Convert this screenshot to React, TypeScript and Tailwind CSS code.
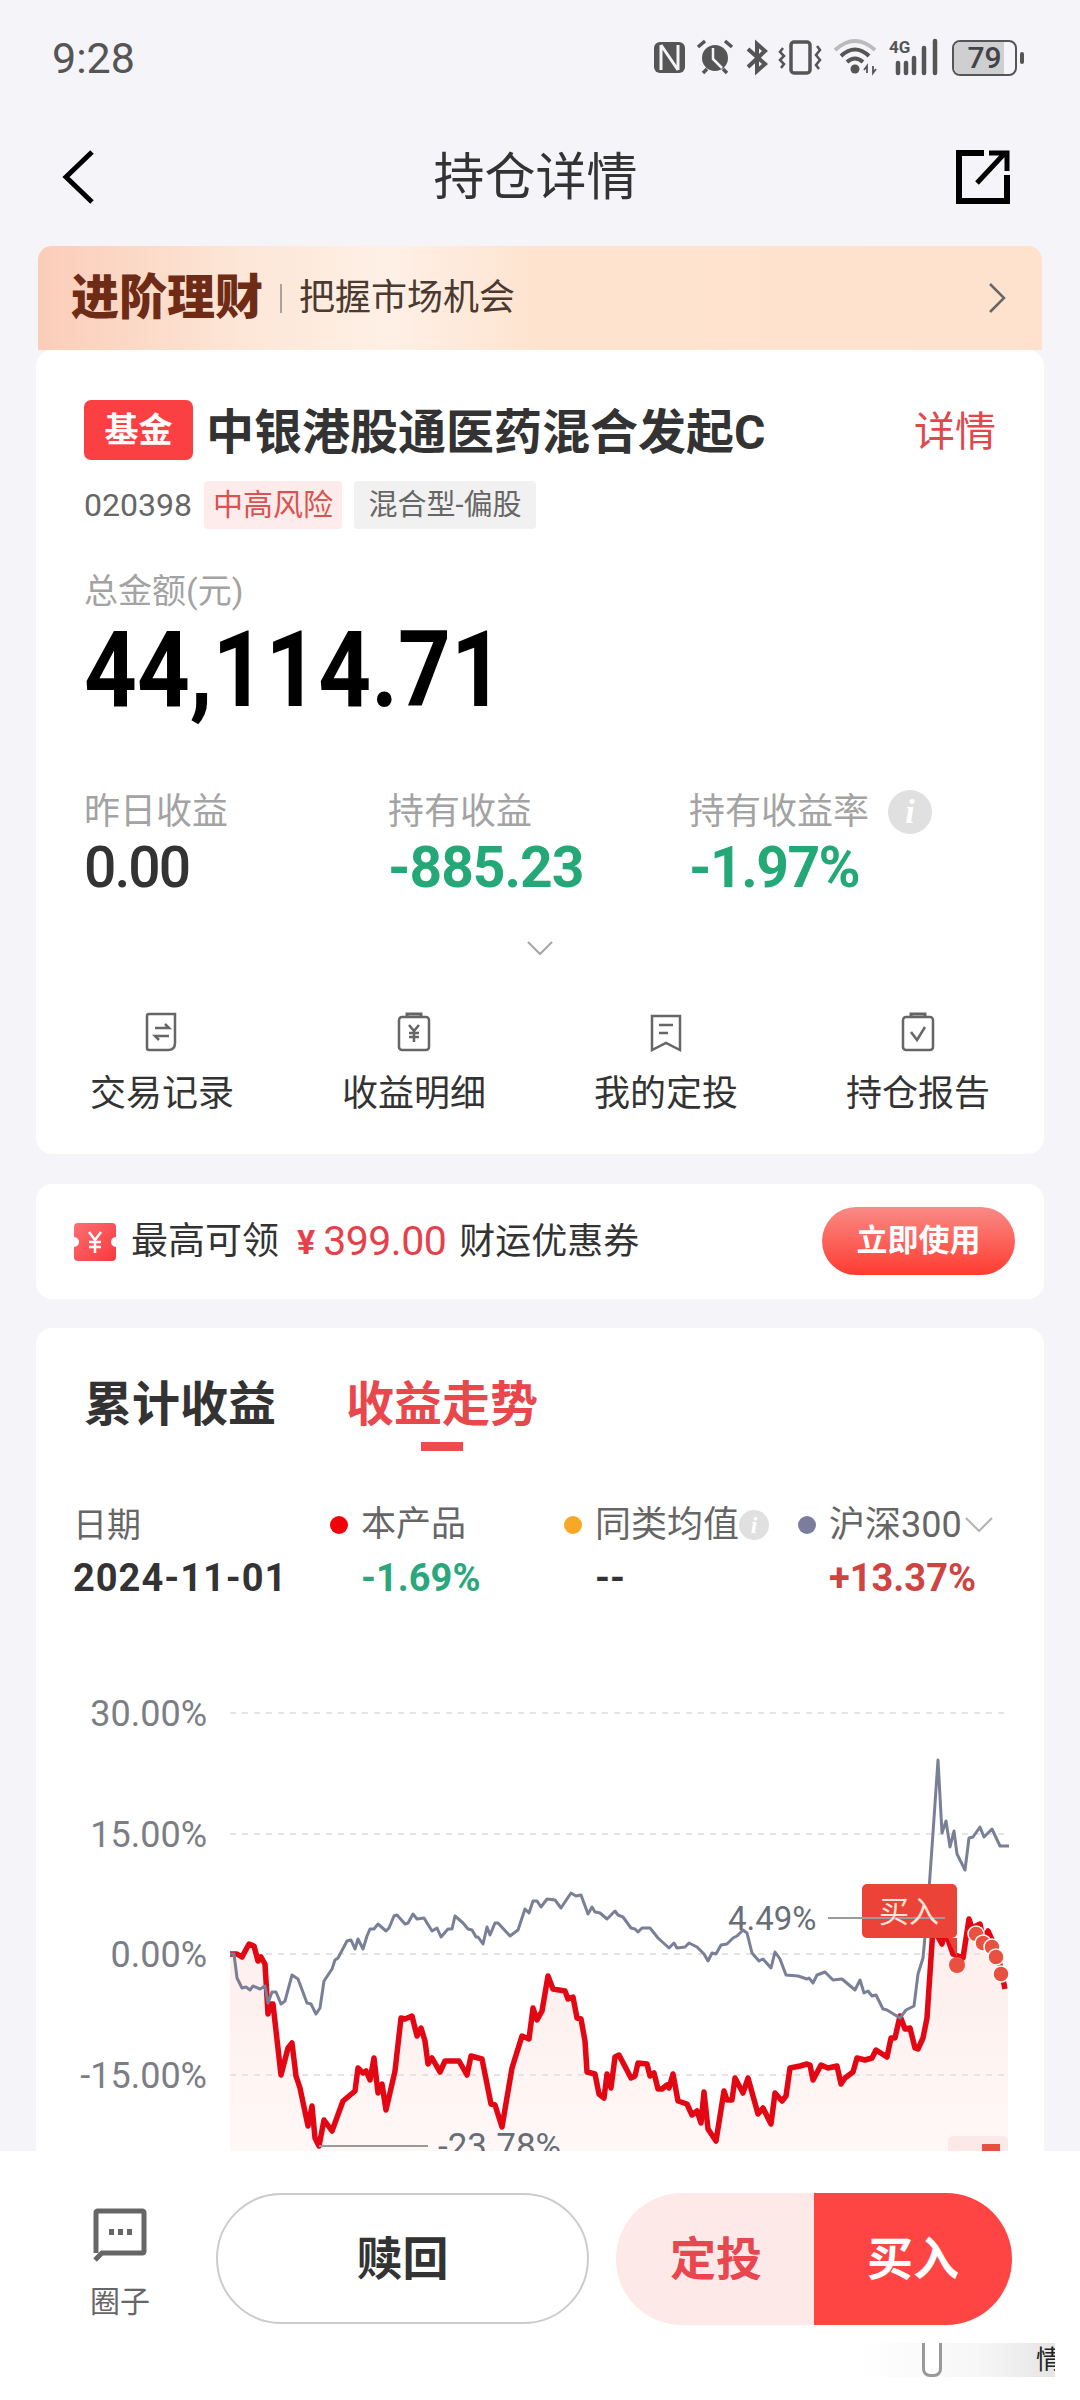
import React from "react";

// chart lines are traced from the screenshot, in page coordinates
const redLine =
  "230,1953 237,1953 242,1956 249,1943 254,1945 258,1960 261,1956 265,1963 268,2013 270,2003 273,2003 281,2074 288,2047 292,2042 296,2075 300,2087 308,2125 312,2105 315,2137 319,2145 324,2119 332,2130 343,2100 355,2090 358,2067 363,2072 366,2070 370,2079 374,2057 378,2092 382,2083 386,2109 395,2070 401,2017 405,2018 412,2015 417,2035 421,2027 425,2040 428,2063 432,2057 440,2071 445,2060 459,2060 467,2074 471,2055 482,2058 491,2103 495,2104 502,2126 512,2067 522,2035 529,2038 533,2007 537,2019 542,2010 548,1975 553,1988 565,1990 568,1998 573,1996 577,2017 581,2018 585,2040 587,2071 595,2073 599,2093 604,2097 607,2073 611,2087 615,2056 619,2054 631,2077 635,2075 638,2062 647,2063 650,2075 654,2072 658,2088 662,2088 667,2084 669,2087 673,2073 678,2100 687,2103 692,2114 697,2110 701,2122 704,2091 708,2128 716,2140 724,2090 727,2099 732,2099 735,2077 743,2092 748,2077 758,2113 763,2107 771,2123 775,2092 782,2100 786,2095 790,2067 800,2065 807,2063 810,2064 813,2079 821,2064 828,2067 837,2065 841,2083 845,2077 853,2071 857,2057 865,2059 872,2057 876,2049 887,2056 891,2037 895,2037 900,2015 905,2028 910,2027 915,2047 918,2048 923,2037 927,2017 933,1927 942,1943 945,1930 953,1953 963,1957 969,1918 972,1927 980,1923 983,1937 988,1930 997,1950 1005,1988";

const grayLine =
  "230,1953 234,1953 237,1977 242,1987 246,1986 250,1989 253,1985 260,1988 265,1985 268,2002 272,1991 276,1991 281,2003 285,2000 292,1974 298,1978 307,2002 311,2003 316,2013 320,2007 324,1980 332,1968 335,1959 338,1957 347,1940 351,1939 355,1948 358,1938 363,1948 367,1935 370,1928 374,1928 378,1923 386,1930 389,1927 394,1915 397,1914 405,1923 408,1922 413,1913 417,1918 424,1917 432,1930 437,1927 441,1936 448,1928 452,1928 455,1915 463,1922 468,1928 472,1929 476,1936 478,1936 483,1943 487,1926 490,1934 495,1922 498,1922 510,1935 518,1929 525,1908 529,1912 533,1900 537,1900 541,1906 547,1898 555,1899 561,1907 571,1892 576,1895 581,1894 588,1913 592,1906 595,1911 600,1912 607,1918 615,1910 618,1914 623,1916 631,1927 635,1928 638,1931 642,1927 650,1927 658,1937 669,1947 674,1942 677,1947 685,1946 689,1942 697,1946 704,1953 708,1960 712,1952 716,1953 721,1944 727,1943 733,1937 737,1935 743,1929 747,1932 752,1952 759,1960 763,1958 771,1967 775,1951 780,1958 786,1974 798,1975 807,1978 809,1977 813,1982 817,1974 825,1971 833,1979 842,1978 855,1989 860,1979 864,1992 868,1990 872,1995 876,1994 883,2008 887,2009 900,2017 906,2009 914,2005 918,1973 923,1957 928,1903 933,1832 938,1759 942,1832 946,1820 950,1846 954,1830 957,1853 965,1869 969,1837 973,1836 980,1826 984,1836 992,1828 1000,1845 1009,1845";

const gridLines = [
  { y: 1712, label: "30.00%" },
  { y: 1833, label: "15.00%" },
  { y: 1953, label: "0.00%" },
  { y: 2074, label: "-15.00%" },
];

const buyDots = [
  [976, 1933],
  [983, 1942],
  [992, 1946],
  [996, 1956],
  [1001, 1973],
];

const StatusIcons = () => (
  <svg width="285" height="40" viewBox="654 38 285 40" className="block">
    {/* nfc */}
    <rect x="654" y="42" width="31" height="31" rx="6" fill="#555" />
    <path d="M661 45V70M661 45L678 70M678 45V70" stroke="#f4f4f9" strokeWidth="3" fill="none" />
    {/* alarm */}
    <circle cx="715" cy="58" r="13" fill="#555" />
    <path d="M713 48V59L722 68" stroke="#f4f4f9" strokeWidth="2.5" fill="none" />
    <path d="M698 47L705 41M732 47L725 41M703 73L707 69M727 73L723 69" stroke="#555" strokeWidth="3.5" fill="none" />
    {/* bluetooth */}
    <path d="M748 49L765 64L757 71V44L765 51L748 67" stroke="#555" strokeWidth="4" fill="none" />
    {/* vibrate */}
    <rect x="791" y="42" width="19" height="31" rx="3" stroke="#555" strokeWidth="3.5" fill="none" />
    <path d="M783 48L780 52L784 56L780 60L784 64L781 68M817 46L820 50L816 55L820 60L816 65L819 69" stroke="#555" strokeWidth="2.5" fill="none" />
    {/* wifi */}
    <path d="M835 50Q855 32 875 50" stroke="#bbb" strokeWidth="4" fill="none" />
    <path d="M841 56Q855 43 869 56M847 62Q855 55 863 62" stroke="#555" strokeWidth="4" fill="none" />
    <circle cx="855" cy="69" r="4.5" fill="#555" />
    <path d="M867 73V66L864 70M873 66V73L876 69" stroke="#555" strokeWidth="1.8" fill="none" />
    {/* 4g + signal */}
    <text x="889" y="53" fontSize="17" fontWeight="700" fill="#555" fontFamily="Roboto, sans-serif">
      4G
    </text>
    <path d="M898 63V73M906 63V73M914 58V73M924 48V73M935 41V73" stroke="#555" strokeWidth="4.5" strokeLinecap="round" fill="none" />
  </svg>
);

const Battery = () => (
  <div className="flex items-center">
    <div className="relative h-[36px] w-[65px] overflow-hidden rounded-[8px] border-[2.5px] border-[#555]">
      <div className="h-full w-[50px] bg-[#cfcfd2]" />
      <span className="absolute inset-0 flex items-center justify-center text-[30px] font-medium leading-none text-[#444]">
        79
      </span>
    </div>
    <div className="ml-[3px] h-[12px] w-[4px] rounded-full bg-[#555]" />
  </div>
);

const TicketIcon = () => (
  <svg width="42" height="38" viewBox="0 0 42 38">
    <defs>
      <linearGradient id="ticket" x1="0" y1="0" x2="1" y2="1">
        <stop offset="0" stopColor="#fb7070" />
        <stop offset="1" stopColor="#f9383f" />
      </linearGradient>
    </defs>
    <path
      d="M4 0H38Q42 0 42 4V14A5 5 0 0 0 42 24V34Q42 38 38 38H4Q0 38 0 34V24A5 5 0 0 0 0 14V4Q0 0 4 0Z"
      fill="url(#ticket)"
    />
    <path d="M15 9L21 17L27 9M21 17V30M15 19H27M15 24H27" stroke="#fff" strokeWidth="2.5" fill="none" />
  </svg>
);

const TradeIcon = () => (
  <svg width="34" height="40" viewBox="0 0 34 40" fill="none" stroke="#666" strokeWidth="2.5">
    <path d="M4 2H30V31Q30 38 23 38H4Q2 38 2 36V4Q2 2 4 2Z" />
    <path d="M10 16H24L20 12M24 24H10L14 28" />
  </svg>
);

const ProfitIcon = () => (
  <svg width="34" height="40" viewBox="0 0 34 40" fill="none" stroke="#666" strokeWidth="2.5">
    <rect x="2" y="5" width="30" height="33" rx="3" />
    <path d="M10 5V2H24V5" strokeWidth="3" />
    <path d="M12 13L17 19L22 13M17 19V30M12 21H22M12 25H22" />
  </svg>
);

const PlanIcon = () => (
  <svg width="34" height="40" viewBox="0 0 34 40" fill="none" stroke="#666" strokeWidth="2.5">
    <path d="M3 4H31V38L17 31L3 38Z" />
    <path d="M10 13H24M10 21H19" />
  </svg>
);

const ReportIcon = () => (
  <svg width="34" height="40" viewBox="0 0 34 40" fill="none" stroke="#666" strokeWidth="2.5">
    <rect x="2" y="5" width="30" height="33" rx="3" />
    <path d="M10 5V2H24V5" strokeWidth="3" />
    <path d="M10 20L16 28L24 15" />
  </svg>
);

const InfoDot = ({ size, text }: { size: string; text: string }) => (
  <span
    className={`flex shrink-0 items-center justify-center rounded-full bg-[#e0e0e0] font-['Liberation_Serif',serif] font-bold italic leading-none text-white ${size} ${text}`}
  >
    i
  </span>
);

const actions = [
  { label: "交易记录", icon: <TradeIcon /> },
  { label: "收益明细", icon: <ProfitIcon /> },
  { label: "我的定投", icon: <PlanIcon /> },
  { label: "持仓报告", icon: <ReportIcon /> },
];

const Chart = () => (
  <svg width="1007" height="520" viewBox="36 1640 1007 520" className="mt-[43px] block">
    <defs>
      <linearGradient id="area" x1="0" y1="1918" x2="0" y2="2160" gradientUnits="userSpaceOnUse">
        <stop offset="0" stopColor="#fdeeec" />
        <stop offset="1" stopColor="#fff8f7" />
      </linearGradient>
    </defs>
    <polygon points={`${redLine} 1008,1988 1008,2160 230,2160`} fill="url(#area)" />
    {gridLines.map((g) => (
      <g key={g.y}>
        <line x1="230" x2="1005" y1={g.y} y2={g.y} stroke="#e4e4e6" strokeWidth="2" strokeDasharray="6 6" />
        <text x="207" y={g.y + 13} textAnchor="end" fontSize="36" fill="#7b7e85" fontFamily="Roboto, sans-serif">
          {g.label}
        </text>
      </g>
    ))}
    <polyline points={redLine} fill="none" stroke="#e30613" strokeWidth="5.5" strokeLinejoin="round" />
    <polyline points={grayLine} fill="none" stroke="#7a7f98" strokeWidth="3" strokeLinejoin="round" />

    <line x1="319" x2="428" y1="2145" y2="2145" stroke="#9a9a9a" strokeWidth="2" />
    <text x="438" y="2157" fontSize="35" fill="#666e78" fontFamily="Roboto, sans-serif">
      -23.78%
    </text>
    <text x="728" y="1929" fontSize="33" fill="#666e78" fontFamily="Roboto, sans-serif">
      4.49%
    </text>

    <path d="M948 1937H957V1956Z" fill="#ec4338" />
    <rect x="862" y="1883" width="95" height="54" rx="5" fill="#ec4338" />
    <line x1="828" x2="945" y1="1917" y2="1917" stroke="#9a9a9a" strokeWidth="2" />
    <text x="909" y="1921" textAnchor="middle" fontSize="30" fill="#fde5d8" fontFamily="'Noto Sans CJK SC', sans-serif">
      买入
    </text>
    <circle cx="957" cy="1964" r="8" fill="#e8503f" />
    {buyDots.map(([cx, cy]) => (
      <circle key={cx} cx={cx} cy={cy} r="8" fill="#e8503f" stroke="#fff" strokeWidth="1.5" />
    ))}

    <path d="M948 2160V2141Q948 2135 954 2135H1002Q1008 2135 1008 2141V2160Z" fill="#fbe9e7" />
    <path d="M982 2143H1000V2160H992V2150H982Z" fill="#e8503f" />
  </svg>
);

export default function App() {
  return (
    <div className="flex h-[2400px] w-[1080px] flex-col overflow-hidden bg-[#f4f4f9] font-[Roboto,'Noto_Sans_CJK_SC',sans-serif]">
      <div className="min-h-0 flex-1 overflow-hidden px-[36px]">
        {/* status bar */}
        <div className="-mx-[36px] flex h-[84px] items-end justify-between pb-[1px] pl-[52px] pr-[56px]">
          <span className="text-[43px] leading-[50px] text-[#555]">9:28</span>
          <div className="flex h-[50px] items-center gap-[13px]">
            <StatusIcons />
            <Battery />
          </div>
        </div>

        {/* nav bar */}
        <div className="-mx-[36px] flex h-[162px] items-center justify-between pl-[60px] pr-[69px] pt-[24px]">
          <svg width="36" height="56" viewBox="0 0 36 56" fill="none" stroke="#000" strokeWidth="5">
            <path d="M32 3L6 28L32 53" />
          </svg>
          <span className="ml-[20px] text-[51px] leading-none text-[#333]">持仓详情</span>
          <svg width="56" height="56" viewBox="0 0 56 56" fill="none" stroke="#000" strokeWidth="6">
            <path d="M29 4H4V52H52V26" />
            <path d="M22 34L50 4M34 4H52V22" strokeWidth="5" />
          </svg>
        </div>

        {/* banner */}
        <div className="mx-[2px] flex h-[104px] items-center rounded-t-[14px] bg-[linear-gradient(90deg,#fbcdb9_0%,#fde6d6_20%,#fef0e6_35%,#fee3cf_50%,#fee2ce_100%)] pl-[33px] pr-[36px]">
          <span className="text-[48px] font-black leading-none text-[#6e2c16]">进阶理财</span>
          <span className="ml-[17px] h-[29px] w-[2px] bg-[#a9a39d]" />
          <span className="ml-[17px] flex-1 text-[36px] leading-none text-[#4a3a30]">把握市场机会</span>
          <svg width="18" height="30" viewBox="0 0 18 30" fill="none" stroke="#666" strokeWidth="2.5">
            <path d="M2 1L16 15L2 29" />
          </svg>
        </div>

        {/* holding card */}
        <div className="h-[804px] rounded-[16px] bg-white">
          <div className="px-[48px] pt-[50px]">
            <div className="flex h-[60px] items-center">
              <span className="flex h-[60px] w-[109px] items-center justify-center rounded-[7px] bg-[#fb4044] text-[34px] font-bold leading-none text-white">
                基金
              </span>
              <span className="ml-[13px] flex-1 pt-[5px] text-[48px] font-bold leading-none text-[#333]">
                中银港股通医药混合发起C
              </span>
              <span className="pt-[5px] text-[41px] leading-none text-[#e2474d]">详情</span>
            </div>
            <div className="mt-[21px] flex h-[48px] items-center">
              <span className="w-[120px] text-[32px] leading-none text-[#666]">020398</span>
              <span className="flex h-[48px] w-[138px] items-center justify-center rounded-[4px] bg-[#fdeceb] text-[30px] leading-none text-[#d9534f]">
                中高风险
              </span>
              <span className="ml-[12px] flex h-[48px] w-[182px] items-center justify-center rounded-[4px] bg-[#f1f1f1] text-[29px] leading-none text-[#666]">
                混合型-偏股
              </span>
            </div>
            <div className="mt-[42px] h-[40px] text-[34px] leading-[40px] text-[#a3a3a3]">总金额(元)</div>
            <div className="mt-[14px] h-[90px] origin-left scale-x-[0.87] text-[106px] font-bold leading-[90px] text-black">
              44,114.71
            </div>
            <div className="mt-[75px] grid grid-cols-[304px_301px_1fr]">
              <div>
                <div className="h-[44px] text-[36px] leading-[44px] text-[#a3a3a3]">昨日收益</div>
                <div className="mt-[6px] h-[56px] text-[57px] font-medium leading-[56px] tracking-[-2px] text-[#333]">0.00</div>
              </div>
              <div>
                <div className="h-[44px] text-[36px] leading-[44px] text-[#a3a3a3]">持有收益</div>
                <div className="mt-[6px] h-[56px] text-[57px] font-bold leading-[56px] tracking-[-1px] text-[#25a877]">-885.23</div>
              </div>
              <div>
                <div className="flex h-[44px] items-center gap-[19px] text-[36px] leading-[44px] text-[#a3a3a3]">
                  持有收益率
                  <InfoDot size="h-[44px] w-[44px]" text="text-[34px]" />
                </div>
                <div className="mt-[6px] h-[56px] text-[57px] font-bold leading-[56px] tracking-[-1.5px] text-[#25a877]">-1.97%</div>
              </div>
            </div>
          </div>
          <div className="mt-[45px] flex justify-center">
            <svg width="26" height="14" viewBox="0 0 26 14" fill="none" stroke="#a8a8a8" strokeWidth="2.2">
              <path d="M1 1L13 13L25 1" />
            </svg>
          </div>
          <div className="mt-[57px] grid grid-cols-4">
            {actions.map((a) => (
              <div key={a.label} className="flex flex-col items-center">
                {a.icon}
                <span className="mt-[22px] text-[36px] leading-[40px] text-[#333]">{a.label}</span>
              </div>
            ))}
          </div>
        </div>

        {/* coupon */}
        <div className="mt-[30px] flex h-[115px] items-center rounded-[16px] bg-white pl-[38px] pr-[29px]">
          <TicketIcon />
          <span className="ml-[15px] text-[37px] leading-none text-[#333]">最高可领</span>
          <span className="ml-[18px] text-[34px] font-bold leading-none text-[#e8404a]">¥</span>
          <span className="ml-[8px] text-[41px] leading-none tracking-[-0.5px] text-[#e8404a]">399.00</span>
          <span className="ml-[13px] flex-1 text-[36px] leading-none text-[#333]">财运优惠券</span>
          <span className="-mt-[2px] flex h-[68px] w-[193px] items-center justify-center rounded-full bg-[linear-gradient(180deg,#f98b86,#ff3b30)] text-[31px] font-bold leading-none text-white">
            立即使用
          </span>
        </div>

        {/* chart card */}
        <div className="mt-[29px] rounded-t-[16px] bg-white pt-[49px]">
          <div className="flex items-start gap-[70px] pl-[48px]">
            <span className="text-[48px] font-bold leading-[56px] text-[#333]">累计收益</span>
            <div className="flex flex-col items-center">
              <span className="text-[48px] font-bold leading-[56px] text-[#e8474c]">收益走势</span>
              <span className="mt-[9px] h-[9px] w-[42px] bg-[#ef4a4c]" />
            </div>
          </div>

          <div className="mt-[54px] grid grid-cols-[257px_234px_234px_1fr] pl-[37px]">
            <div>
              <div className="h-[40px] text-[34px] leading-[40px] text-[#666]">日期</div>
              <div className="mt-[13px] h-[40px] text-[38px] font-bold leading-[40px] tracking-[1px] text-[#333]">2024-11-01</div>
            </div>
            <div>
              <div className="flex h-[40px] items-center gap-[13px] text-[35px] leading-[40px] text-[#666]">
                <span className="h-[18px] w-[18px] rounded-full bg-[#f40009]" />
                本产品
              </div>
              <div className="mt-[13px] h-[40px] pl-[31px] text-[38px] font-bold leading-[40px] text-[#2aa77c]">-1.69%</div>
            </div>
            <div>
              <div className="flex h-[40px] items-center text-[36px] leading-[40px] text-[#666]">
                <span className="mr-[13px] h-[18px] w-[18px] rounded-full bg-[#f9a825]" />
                同类均值
                <InfoDot size="h-[30px] w-[30px]" text="text-[24px]" />
              </div>
              <div className="mt-[13px] h-[40px] pl-[31px] text-[38px] font-bold leading-[40px] text-[#333]">--</div>
            </div>
            <div>
              <div className="flex h-[40px] items-center text-[36px] leading-[40px] text-[#666]">
                <span className="mr-[13px] h-[18px] w-[18px] rounded-full bg-[#7a7d9c]" />
                沪深300
                <svg width="28" height="16" viewBox="0 0 28 16" fill="none" stroke="#b5b5b5" strokeWidth="2.2" className="ml-[3px]">
                  <path d="M1 1L14 14L27 1" />
                </svg>
              </div>
              <div className="mt-[13px] h-[40px] pl-[31px] text-[38px] font-bold leading-[40px] text-[#cf4441]">+13.37%</div>
            </div>
          </div>

          <Chart />
        </div>
      </div>

      {/* bottom bar */}
      <div className="relative flex h-[249px] shrink-0 items-start bg-white pl-[90px] pt-[42px]">
        <div className="flex w-[60px] flex-col items-center pt-[15px]">
          <svg width="54" height="54" viewBox="0 0 54 54" fill="none">
            <path d="M3 45V5Q3 3 5 3H49Q51 3 51 5V43Q51 45 49 45H9L2 52" stroke="#666" strokeWidth="5" />
            <path d="M16 24H21M25 24H30M34 24H39" stroke="#666" strokeWidth="6" />
          </svg>
          <span className="mt-[22px] whitespace-nowrap text-[30px] leading-[36px] text-[#666]">圈子</span>
        </div>
        <div className="ml-[66px] flex h-[131px] w-[373px] items-center justify-center rounded-full border-2 border-[#ccc] text-[46px] font-bold leading-none text-[#333]">
          赎回
        </div>
        <div className="ml-[27px] flex h-[132px] w-[396px] overflow-hidden rounded-full">
          <div className="flex w-[198px] items-center justify-center bg-[#fde9e8] pl-[2px] text-[46px] font-bold leading-none text-[#e8474f]">
            定投
          </div>
          <div className="flex flex-1 items-center justify-center bg-[#ff4444] text-[46px] font-bold leading-none text-white">
            买入
          </div>
        </div>

        {/* smudged watermark */}
        <div className="absolute left-[857px] top-[192px] h-[34px] w-[198px] overflow-hidden bg-[linear-gradient(90deg,#ffffff00_0%,#efefef80_60%,#c8c8c870_96%)]">
          <div className="absolute left-[65px] top-0 h-[34px] w-[20px] rounded-b-[8px] border-x-[3px] border-b-[3px] border-[#55555599] bg-white" />
          <span className="absolute left-[179px] top-[4px] text-[26px] leading-none text-[#222]">情</span>
        </div>
      </div>
    </div>
  );
}
